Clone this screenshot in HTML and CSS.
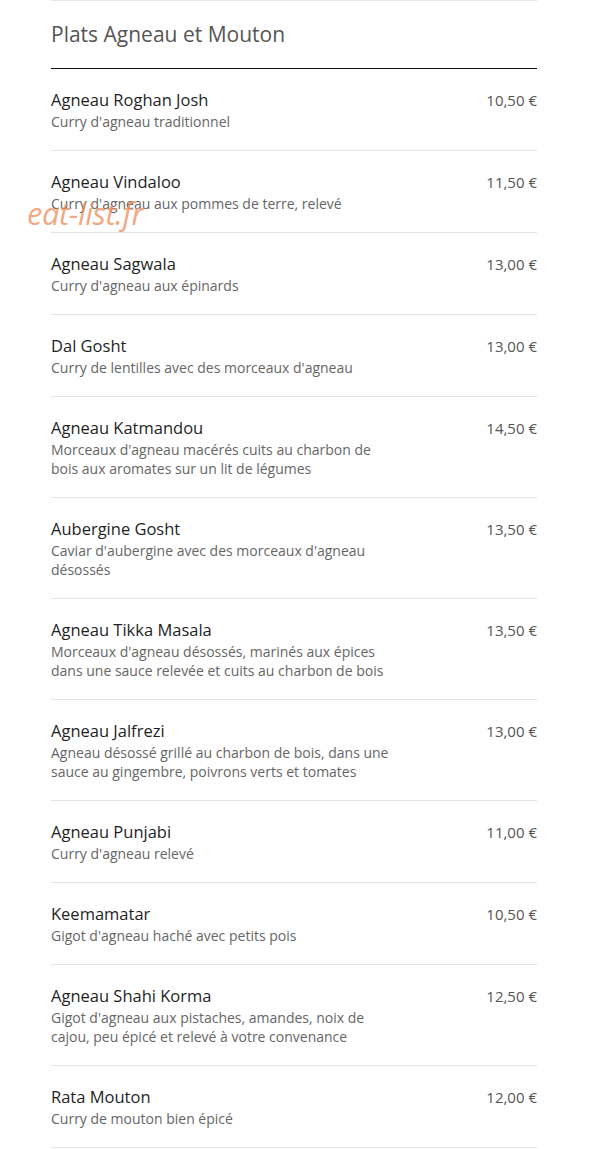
FILE: index.html
```html
<!DOCTYPE html>
<html lang="fr">
  <head>
    <meta charset="UTF-8" />
    <meta name="viewport" content="width=device-width, initial-scale=1.0" />
    <title>Plats Agneau et Mouton</title>
    <link rel="stylesheet" href="styles.css">
  </head>
  <body>
    <div class="menu-section">
      <h2 class="section-title">Plats Agneau et Mouton</h2>
      <ul class="dish-list">
        <li class="dish">
          <div class="dish-info">
            <div class="dish-name">Agneau Roghan Josh</div>
            <div class="dish-desc">Curry d'agneau traditionnel</div>
          </div>
          <div class="dish-price">10,50 €</div>
        </li>
        <li class="dish">
          <div class="dish-info">
            <div class="dish-name">Agneau Vindaloo</div>
            <div class="dish-desc">Curry d'agneau aux pommes de terre, relevé</div>
          </div>
          <div class="dish-price">11,50 €</div>
        </li>
        <li class="dish">
          <div class="dish-info">
            <div class="dish-name">Agneau Sagwala</div>
            <div class="dish-desc">Curry d'agneau aux épinards</div>
          </div>
          <div class="dish-price">13,00 €</div>
        </li>
        <li class="dish">
          <div class="dish-info">
            <div class="dish-name">Dal Gosht</div>
            <div class="dish-desc">Curry de lentilles avec des morceaux d'agneau</div>
          </div>
          <div class="dish-price">13,00 €</div>
        </li>
        <li class="dish">
          <div class="dish-info">
            <div class="dish-name">Agneau Katmandou</div>
            <div class="dish-desc">Morceaux d'agneau macérés cuits au charbon de bois aux aromates sur un lit de légumes</div>
          </div>
          <div class="dish-price">14,50 €</div>
        </li>
        <li class="dish">
          <div class="dish-info">
            <div class="dish-name">Aubergine Gosht</div>
            <div class="dish-desc">Caviar d'aubergine avec des morceaux d'agneau désossés</div>
          </div>
          <div class="dish-price">13,50 €</div>
        </li>
        <li class="dish">
          <div class="dish-info">
            <div class="dish-name">Agneau Tikka Masala</div>
            <div class="dish-desc">Morceaux d'agneau désossés, marinés aux épices dans une sauce relevée et cuits au charbon de bois</div>
          </div>
          <div class="dish-price">13,50 €</div>
        </li>
        <li class="dish">
          <div class="dish-info">
            <div class="dish-name">Agneau Jalfrezi</div>
            <div class="dish-desc">Agneau désossé grillé au charbon de bois, dans une sauce au gingembre, poivrons verts et tomates</div>
          </div>
          <div class="dish-price">13,00 €</div>
        </li>
        <li class="dish">
          <div class="dish-info">
            <div class="dish-name">Agneau Punjabi</div>
            <div class="dish-desc">Curry d'agneau relevé</div>
          </div>
          <div class="dish-price">11,00 €</div>
        </li>
        <li class="dish">
          <div class="dish-info">
            <div class="dish-name">Keemamatar</div>
            <div class="dish-desc">Gigot d'agneau haché avec petits pois</div>
          </div>
          <div class="dish-price">10,50 €</div>
        </li>
        <li class="dish">
          <div class="dish-info">
            <div class="dish-name">Agneau Shahi Korma</div>
            <div class="dish-desc">Gigot d'agneau aux pistaches, amandes, noix de cajou, peu épicé et relevé à votre convenance</div>
          </div>
          <div class="dish-price">12,50 €</div>
        </li>
        <li class="dish">
          <div class="dish-info">
            <div class="dish-name">Rata Mouton</div>
            <div class="dish-desc">Curry de mouton bien épicé</div>
          </div>
          <div class="dish-price">12,00 €</div>
        </li>
      </ul>
    </div>
    <div class="watermark">eat-list.fr</div>
  </body>
</html>
```

FILE: styles.css
```css
body {
  margin: 0;
  padding: 0;
  background-color: #fff;
  font-family: "Open Sans", "Liberation Sans", sans-serif;
  position: relative;
}
.menu-section {
  margin: 0 53px 0 51px;
  border-top: 1px solid #e8e8e8;
}
.section-title {
  margin: 0;
  height: 67px;
  line-height: 67px;
  font-size: 21px;
  font-weight: normal;
  color: #555;
  border-bottom: 1px solid #111;
}
.dish-list {
  list-style: none;
  margin: 0;
  padding: 0;
}
.dish {
  display: flex;
  justify-content: space-between;
  padding: 19px 0 19px;
  border-bottom: 1px solid #e5e5e5;
}
.dish-info {
  max-width: 345px;
}
.dish-name {
  font-size: 16.5px;
  line-height: 24px;
  color: #1f1f1f;
}
.dish-desc {
  font-size: 14px;
  line-height: 19px;
  color: #666;
}
.dish-price {
  font-size: 15px;
  line-height: 24px;
  color: #555;
}
.watermark {
  position: absolute;
  left: 27px;
  top: 192px;
  font-size: 31px;
  font-style: italic;
  color: rgba(236, 140, 90, 0.75);
  letter-spacing: -0.5px;
}
```
